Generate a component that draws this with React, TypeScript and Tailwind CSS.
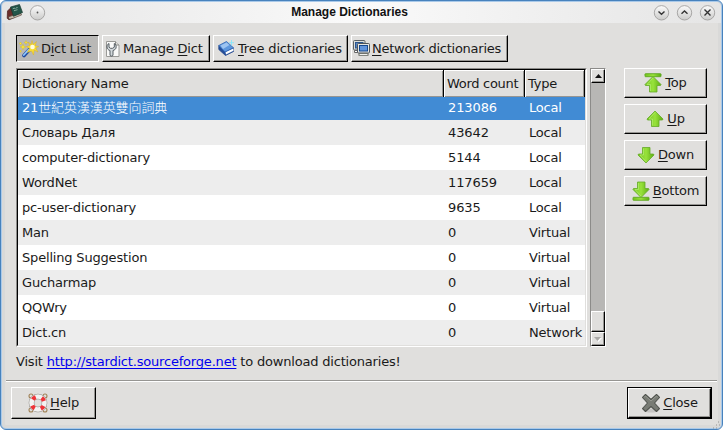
import React from "react";

const raised = "border border-t-white border-l-white border-r-black border-b-black shadow-[inset_-1px_-1px_0_#969592] bg-[#e0dfdd]";

function Wand() {
  return (
    <svg width="20" height="18" viewBox="0 0 20 18" className="shrink-0">
      <path d="M5 15.500 10 10" stroke="#1f4aa0" strokeWidth="3.600" strokeLinecap="round" />
      <path d="M4.800 15 9.500 9.800" stroke="#8fc6fa" strokeWidth="1.800" strokeLinecap="round" />
      <path d="m13 .5 1 4L17.500 1.500l-1.300 4.200 3.500.8-3 1.500L19 12l-3.700-1.800L14.500 15 12.500 11l-4.200 1.500L10.500 8.500 7.500 6.500l3.500-.9L9 2l3.200 2.400z" fill="#f7dc36" stroke="#d9b02b" strokeWidth=".5" />
      <circle cx="13.500" cy="7" r="2.300" fill="#fffde0" />
      <path d="m4 4 .7 2.200L7 7l-2.300.8L4 10l-.8-2.200L1 7l2.200-.8zM7 .5l.6 1.600L9 2.500l-1.400.5L7 4.500l-.5-1.500L5 2.500l1.500-.4zM1.500 2l.5 1 1 .5-1 .5-.5 1-.5-1-1-.5 1-.5zM1.500 10l.4.8.8.4-.8.4-.4.8-.4-.8-.8-.4.8-.4z" fill="#ffe92d" stroke="#d9ba2c" strokeWidth=".4" />
    </svg>
  );
}

function Wrench() {
  return (
    <svg width="16" height="18" viewBox="0 0 16 18" className="shrink-0">
      <path d="M1.500 1.500h9l3.500 3.500v11.500H1.500z" fill="#fafaf9" stroke="#9a9a97" />
      <path d="M10.500 1.500V5H14" fill="#e0e0de" stroke="#8a8a87" />
      <path d="M4 3.500C2 4.500 1.500 6.500 2.300 8.300 3 9.700 4 10.300 5 10.500V15c0 1.500 3 1.500 3 0v-4.500c1.500-.4 2.500-1.200 3-2.500.5-1.600 0-3.500-1.700-4.500v3.700L7.500 8.300h-2L4 7.200z" fill="#d3d9dc" stroke="#485056" strokeWidth=".9" />
    </svg>
  );
}

function Book() {
  return (
    <svg width="17" height="17" viewBox="0 0 17 17" className="shrink-0">
      <path d="M.8 5.500v4L7.500 15.500l8-4V8z" fill="#244e9a" stroke="#24488d" strokeWidth=".8" />
      <path d="m7.500 12 8-3.800v2.600L8 14.500z" fill="#fff" />
      <path d="M.8 5.500 8.500 1.500l7 6.300L7 12z" fill="#5e97dd" stroke="#3165b3" strokeWidth=".8" />
      <path d="m2.500 5.500 6-3 3 2.500L5 9z" fill="#9dc4f1" />
      <path d="M13.500 0v5.500M11 2.700h5" stroke="#86e8fb" strokeWidth=".9" />
    </svg>
  );
}

function Computers() {
  return (
    <svg width="17" height="17" viewBox="0 0 17 17" className="shrink-0">
      <rect x=".5" y=".5" width="11.500" height="9.500" rx="1" fill="#dedfda" stroke="#5b6266" />
      <rect x="2.500" y="2.500" width="7.500" height="5.500" fill="#5785c0" stroke="#2b568e" />
      <path d="M1.500 10.500h3v2h-3z" fill="#fff" stroke="#666" />
      <rect x="4.500" y="3.500" width="12" height="9.500" rx="1" fill="#e6e6e1" stroke="#50575c" />
      <rect x="6.500" y="5.500" width="8" height="5.500" fill="#5f94dc" stroke="#164990" />
      <path d="M5.500 14.500h10" stroke="#62665f" strokeWidth="2.500" />
      <path d="M6.500 14.500h8" stroke="#f0f0ee" strokeWidth="1.100" />
    </svg>
  );
}

function Arrow({ down = false, bar = false }: { down?: boolean; bar?: boolean }) {
  return (
    <svg width="18" height={bar ? 20 : 18} viewBox={bar ? "0 0 18 20" : "0 2.500 18 18"} className={down ? "shrink-0 -scale-y-100" : "shrink-0"}>
      <defs>
        <linearGradient id="leaf">
          <stop stopColor="#75c51f" />
          <stop offset=".5" stopColor="#98e23c" />
          <stop offset="1" stopColor="#5eae12" />
        </linearGradient>
      </defs>
      {bar && <rect x="1" y=".7" width="16" height="3" rx=".5" fill="url(#leaf)" stroke="#61a822" strokeWidth=".9" />}
      <path d="M9 3.500 17 11.500l-.5 1H13V19H5.500v-6.500H1.500l-.5-1z" fill="url(#leaf)" stroke="#65aa2a" strokeWidth=".8" strokeLinejoin="round" />
      <path d="M9 5 3 11.500h3.500V18" fill="none" stroke="#b4ee72" strokeWidth=".7" />
    </svg>
  );
}

function LifeRing() {
  return (
    <svg width="20" height="20" viewBox="0 0 20 20" className="shrink-0">
      <g fill="none" stroke="#a18358" strokeWidth="1.100"><circle cx="3" cy="3" r="2" /><circle cx="17" cy="3" r="2" /><circle cx="3" cy="17" r="2" /><circle cx="17" cy="17" r="2" /></g>
      <circle cx="10" cy="10" r="6.500" fill="none" stroke="#8f8c88" strokeWidth="5.600" />
      <circle cx="10" cy="10" r="6.500" fill="none" stroke="#f3f3f2" strokeWidth="4.600" />
      <circle cx="10" cy="10" r="6.300" fill="none" stroke="#ee3338" strokeWidth="4.200" strokeDasharray="3.600 6.296" strokeDashoffset="-3.148" />
    </svg>
  );
}

function CloseCross() {
  return (
    <svg width="20" height="20" viewBox="0 0 20 20" className="shrink-0">
      <ellipse cx="10" cy="17.500" rx="7" ry="2" fill="#c5c4c2" />
      <path d="m4.500 1.500 5.500 5 5.500-5 3 3-5 5.500 5 5.500-3 3-5.500-5-5.500 5-3-3 5-5.500-5-5.500z" fill="#787b74" stroke="#50534e" strokeWidth="1.100" strokeLinejoin="round" />
      <path d="m3 4.500 1.500-1.500 5.500 5L15.500 3 17 4.500" fill="none" stroke="#999c94" />
    </svg>
  );
}

function AppIcon() {
  return (
    <svg width="17" height="17" viewBox="0 0 17 17" className="shrink-0">
      <path d="M1.500 7 5 3.500 9 13l-6 2.800-1.800-1.500z" fill="#6b2e2b" stroke="#471f1d" strokeWidth=".7" />
      <path d="m2.500 12.800 5-1.500 7.500-1.800.5 1.500-9 3.500-3.500.8z" fill="#c9bdae" stroke="#4a352d" strokeWidth=".6" />
      <path d="M4.500 3 13.500.5 16.500 8.500 7.500 12.300z" fill="#24564a" stroke="#183a31" strokeWidth=".7" />
      <path d="m6.800 4.700 2-.6.600.9M10 4l1.600-.5M8 6.700l3.500-1" stroke="#9dbdb0" strokeWidth=".8" fill="none" />
    </svg>
  );
}

function RoundButton({ kind }: { kind: "dot" | "down" | "up" | "x" }) {
  return (
    <svg width="17" height="17" viewBox="0 0 17 17" className="shrink-0">
      <defs>
        <linearGradient id="knob" x1="0" y1="0" x2="0" y2="1">
          <stop stopColor="#fbfbfb" />
          <stop offset="1" stopColor="#cbcbca" />
        </linearGradient>
      </defs>
      <circle cx="8.500" cy="8.800" r="7.200" fill="url(#knob)" stroke="#a09f9e" strokeWidth=".9" />
      {kind === "dot" && <circle cx="8.500" cy="8.500" r=".9" fill="#555" />}
      {kind === "down" && <path d="m5.500 7.500 3 2.800 3-2.800" fill="none" stroke="#333" strokeWidth="1.400" />}
      {kind === "up" && <path d="m5.500 9.800 3-2.800 3 2.800" fill="none" stroke="#333" strokeWidth="1.400" />}
      {kind === "x" && <path d="m5.500 5.500 6 6m0-6-6 6" stroke="#333" strokeWidth="1.400" />}
    </svg>
  );
}

function Label({ pre = "", hot, post }: { pre?: string; hot: string; post: string }) {
  return (
    <span className="whitespace-pre">
      {pre}<span className="underline decoration-1 underline-offset-2 [text-decoration-skip-ink:none]">{hot}</span>{post}
    </span>
  );
}

const rows = [
  ["21世紀英漢漢英雙向詞典", "213086", "Local"],
  ["Словарь Даля", "43642", "Local"],
  ["computer-dictionary", "5144", "Local"],
  ["WordNet", "117659", "Local"],
  ["pc-user-dictionary", "9635", "Local"],
  ["Man", "0", "Virtual"],
  ["Spelling Suggestion", "0", "Virtual"],
  ["Gucharmap", "0", "Virtual"],
  ["QQWry", "0", "Virtual"],
  ["Dict.cn", "0", "Network"],
];

const moves = [
  { hot: "T", post: "op", down: false, bar: true },
  { hot: "U", post: "p", down: false, bar: false },
  { hot: "D", post: "own", down: true, bar: false },
  { hot: "B", post: "ottom", down: true, bar: true },
];

const headCell = "border-t border-l border-white leading-[26px]";

export default function App() {
  return (
    <div className="h-[430px] w-[723px] overflow-hidden bg-white">
      <div className="flex h-[430px] w-[723px] flex-col overflow-hidden rounded-[6px] border border-[#4782bd] bg-[#e0dfdd] font-['DejaVu_Sans','Noto_Sans_CJK_TC',sans-serif] text-[13px] tracking-[-0.18px] text-[#1a1a1a] shadow-[inset_0_0_0_1px_#a9c9e9,inset_0_0_0_4px_#d9d9d8]">
        <header className="mx-px mt-px grid h-[21px] shrink-0 grid-cols-[1fr_auto_1fr] items-center rounded-t-[5px] bg-gradient-to-r from-[#e5e5e5] via-[#fafafa] to-[#e5e5e5] pr-[5px] pl-1">
          <div className="flex items-center gap-[6px]"><AppIcon /><RoundButton kind="dot" /></div>
          <h1 className="pr-[23px] pb-[2px] font-['Liberation_Sans',Arial,sans-serif] text-[12px] leading-[18px] font-bold tracking-normal text-[#111]">Manage Dictionaries</h1>
          <div className="flex items-center justify-end gap-[6px]">
            <RoundButton kind="down" /><RoundButton kind="up" /><RoundButton kind="x" />
          </div>
        </header>

        <nav className="mt-3 ml-[15px] flex h-[27px] shrink-0">
          <button className="mr-[3px] flex w-[83px] items-center gap-[2px] border border-t-black border-l-black border-r-white border-b-white bg-[#b9b8b6] pl-[2px] tracking-[-0.3px]"><Wand /><Label pre="D" hot="i" post="ct List" /></button>
          <button className={`mr-[3px] flex w-[108px] items-center gap-[2px] pl-[2px] ${raised}`}><Wrench /><Label pre="Manage " hot="D" post="ict" /></button>
          <button className={`mr-[3px] flex w-[135px] items-center gap-[3px] pl-[4px] ${raised}`}><Book /><Label hot="T" post="ree dictionaries" /></button>
          <button className={`flex w-[157px] items-center gap-[2px] pl-px tracking-[-0.25px] ${raised}`}><Computers /><Label hot="N" post="etwork dictionaries" /></button>
        </nav>

        <main className="mt-[6px] ml-[15px] flex h-[279px] shrink-0">
          <section className="w-[571px] border border-t-[#8c8b89] border-l-[#8c8b89] border-r-white border-b-white">
            <div className="h-[277px] overflow-hidden border border-t-black border-l-black border-r-[#e0dfdd] border-b-[#e0dfdd]">
              <div className="grid h-[27px] grid-cols-[426px_81px_60px] border-b border-black bg-[#e0dfdd]">
                <div className={`${headCell} mr-px pl-[3px] shadow-[inset_-1px_-1px_0_#969592]`}>Dictionary Name</div>
                <div className={`${headCell} mr-px pl-[2px] tracking-[-0.3px] shadow-[inset_-1px_-1px_0_#969592,-1px_0_0_#000]`}>Word count</div>
                <div className={`${headCell} mr-px pl-[2px] shadow-[inset_-1px_-1px_0_#969592,-1px_0_0_#000,1px_0_0_#000]`}>Type</div>
              </div>
              <div className="-mt-px">
                {rows.map((row, i) => (
                  <div key={row[0]} className={`grid h-[25px] grid-cols-[426px_81px_60px] leading-[25px] ${i === 0 ? "h-[24px]! border-t border-black bg-[#418bd4] leading-[22px]! text-white" : i % 2 ? "bg-[#ededed]" : "bg-white"}`}>
                    <span className="pl-1">
                      {i === 0 ? <>21<span className="font-light tracking-[-0.1px]">{row[0].slice(2)}</span></> : row[0]}
                    </span>
                    <span className="pl-1 tracking-[-0.1px]">{row[1]}</span>
                    <span className="pl-1">{row[2]}</span>
                  </div>
                ))}
              </div>
            </div>
          </section>

          <aside className="ml-[3px] flex w-[16px] flex-col border border-t-[#8c8b89] border-l-[#8c8b89] border-r-white border-b-white bg-[#b8b7b5]">
            <div className={`flex h-[14px] items-center justify-center ${raised}`}><svg width="7" height="4"><path d="M0 4 3.500 0 7 4z" fill="#111" /></svg></div>
            <div className={`mt-auto h-[21px] ${raised}`} />
            <div className={`flex h-[14px] items-center justify-center ${raised}`}><svg width="8" height="5"><path d="M1 1h7L4.500 5z" fill="#fff" /><path d="M0 0h7L3.500 4z" fill="#aaa9a7" /></svg></div>
          </aside>

          <div className="ml-[18px] flex flex-col gap-[6px]">
            {moves.map((m) => (
              <button key={m.hot} className={`flex h-[30px] w-[83px] items-center justify-center gap-[3px] ${raised}`}><Arrow down={m.down} bar={m.bar} /><Label hot={m.hot} post={m.post} /></button>
            ))}
          </div>
        </main>

        <p className="mt-[5px] ml-[15px] h-[20px] shrink-0 leading-[20px] tracking-[-0.19px]">Visit <a href="#" className="text-[#0000ee] underline decoration-1 underline-offset-2 [text-decoration-skip-ink:none]">http://stardict.sourceforge.net</a> to download dictionaries!</p>
        <div className="mt-[8px] mr-[5px] ml-[5px] h-[2px] shrink-0 border-t border-b border-t-[#969592] border-b-white" />
        <footer className="mt-[5px] mr-[10px] ml-[10px] flex h-[32px] shrink-0 justify-between">
          <button className={`flex w-[85px] items-center justify-center gap-[2px] ${raised}`}><LifeRing /><Label hot="H" post="elp" /></button>
          <div className="w-[85px] border border-black"><button className={`flex h-[30px] w-[83px] items-center justify-center gap-[2px] ${raised}`}><CloseCross /><Label hot="C" post="lose" /></button></div>
        </footer>
        <div className="mt-auto mr-px flex justify-end">
          <svg width="8" height="8" viewBox="0 0 8 8"><path d="M5 1h1M3 4h1M6 4h1M0 7h1M3 7h1" stroke="#969592" strokeWidth="1" /></svg>
        </div>
      </div>
    </div>
  );
}
